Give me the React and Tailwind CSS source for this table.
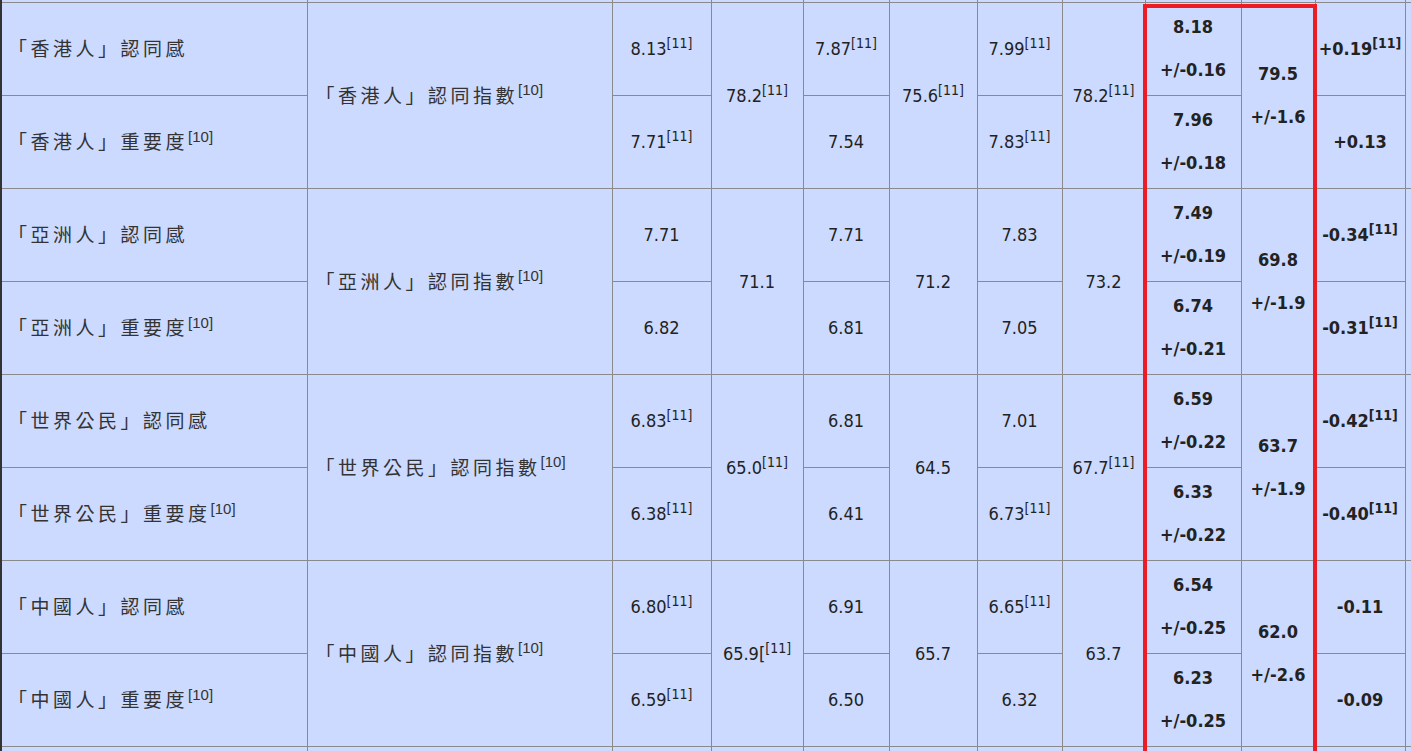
import React from 'react';

const groups = [
  {
    labels: ['「香港人」認同感', '「香港人」重要度|10'],
    index: '「香港人」認同指數|10',
    c3: ['8.13|11', '7.71|11'],
    c4: '78.2|11',
    c5: ['7.87|11', '7.54'],
    c6: '75.6|11',
    c7: ['7.99|11', '7.83|11'],
    c8: '78.2|11',
    c9: [['8.18', '+/-0.16'], ['7.96', '+/-0.18']],
    c10: ['79.5', '+/-1.6'],
    c11: ['+0.19|11', '+0.13'],
  },
  {
    labels: ['「亞洲人」認同感', '「亞洲人」重要度|10'],
    index: '「亞洲人」認同指數|10',
    c3: ['7.71', '6.82'],
    c4: '71.1',
    c5: ['7.71', '6.81'],
    c6: '71.2',
    c7: ['7.83', '7.05'],
    c8: '73.2',
    c9: [['7.49', '+/-0.19'], ['6.74', '+/-0.21']],
    c10: ['69.8', '+/-1.9'],
    c11: ['-0.34|11', '-0.31|11'],
  },
  {
    labels: ['「世界公民」認同感', '「世界公民」重要度|10'],
    index: '「世界公民」認同指數|10',
    c3: ['6.83|11', '6.38|11'],
    c4: '65.0|11',
    c5: ['6.81', '6.41'],
    c6: '64.5',
    c7: ['7.01', '6.73|11'],
    c8: '67.7|11',
    c9: [['6.59', '+/-0.22'], ['6.33', '+/-0.22']],
    c10: ['63.7', '+/-1.9'],
    c11: ['-0.42|11', '-0.40|11'],
  },
  {
    labels: ['「中國人」認同感', '「中國人」重要度|10'],
    index: '「中國人」認同指數|10',
    c3: ['6.80|11', '6.59|11'],
    c4: '65.9[|11',
    c5: ['6.91', '6.50'],
    c6: '65.7',
    c7: ['6.65|11', '6.32'],
    c8: '63.7',
    c9: [['6.54', '+/-0.25'], ['6.23', '+/-0.25']],
    c10: ['62.0', '+/-2.6'],
    c11: ['-0.11', '-0.09'],
  },
];

const widths = [306, 305, 99, 92, 86, 88, 85, 83, 96, 74, 90, 30];

const cell = 'border border-[#8a8a8a] p-0 align-middle bg-[#ccdaff]';
const numCell = `${cell} text-center text-[18px] text-[#222] font-['DejaVu_Sans_Condensed','DejaVu_Sans',sans-serif] [font-stretch:condensed]`;
const boldCell = `${numCell} font-bold`;
const zhCell = `${cell} text-left text-[19px] tracking-[3.5px] text-[#333] font-['Noto_Sans_CJK_TC',sans-serif]`;

function Val({ v, zh }) {
  const [t, s] = v.split('|');
  return (
    <>
      {t}
      {s &&
        (zh ? (
          <sup className="relative top-0 align-super text-[15px] tracking-normal font-['Liberation_Sans',sans-serif]">
            [{s}]
          </sup>
        ) : (
          <sup className="relative top-0 align-super text-[14px] tracking-normal">[{s}]</sup>
        ))}
    </>
  );
}

function Pair({ lines }) {
  return (
    <div className="flex flex-col items-center gap-[21px] leading-[22px]">
      <span>{lines[0]}</span>
      <span>{lines[1]}</span>
    </div>
  );
}

function Group({ g }) {
  return (
    <>
      <tr className="h-[93px]">
        <td className={`${zhCell} border-l-2 border-l-[#333] pl-[6px]`}>
          <Val v={g.labels[0]} zh />
        </td>
        <td rowSpan={2} className={`${zhCell} pl-[8px]`}>
          <Val v={g.index} zh />
        </td>
        <td className={numCell}><Val v={g.c3[0]} /></td>
        <td rowSpan={2} className={numCell}><Val v={g.c4} /></td>
        <td className={numCell}><Val v={g.c5[0]} /></td>
        <td rowSpan={2} className={numCell}><Val v={g.c6} /></td>
        <td className={numCell}><Val v={g.c7[0]} /></td>
        <td rowSpan={2} className={numCell}><Val v={g.c8} /></td>
        <td className={boldCell}><Pair lines={g.c9[0]} /></td>
        <td rowSpan={2} className={boldCell}><Pair lines={g.c10} /></td>
        <td className={boldCell}><Val v={g.c11[0]} /></td>
        <td rowSpan={2} className={cell}></td>
      </tr>
      <tr className="h-[93px]">
        <td className={`${zhCell} border-l-2 border-l-[#333] pl-[6px]`}>
          <Val v={g.labels[1]} zh />
        </td>
        <td className={numCell}><Val v={g.c3[1]} /></td>
        <td className={numCell}><Val v={g.c5[1]} /></td>
        <td className={numCell}><Val v={g.c7[1]} /></td>
        <td className={boldCell}><Pair lines={g.c9[1]} /></td>
        <td className={boldCell}><Val v={g.c11[1]} /></td>
      </tr>
    </>
  );
}

export default function App() {
  return (
    <div className="relative h-[751px] w-[1411px] overflow-hidden bg-[#ccdaff]">
      <table className="table-fixed border-collapse" style={{ width: widths.reduce((a, b) => a + b, 0) }}>
        <colgroup>
          {widths.map((w, i) => (
            <col key={i} style={{ width: w }} />
          ))}
        </colgroup>
        <tbody>
          <tr className="h-[2px]">
            {widths.map((w, i) => (
              <td key={i} className={`${cell} border-t-0 ${i === 0 ? 'border-l-2 border-l-[#333]' : ''}`}></td>
            ))}
          </tr>
          {groups.map((g, i) => (
            <Group key={i} g={g} />
          ))}
          <tr className="h-[20px]">
            {widths.map((w, i) => (
              <td key={i} className={`${cell} ${i === 0 ? 'border-l-2 border-l-[#333]' : ''}`}></td>
            ))}
          </tr>
        </tbody>
      </table>
      <div className="pointer-events-none absolute left-[1143px] top-[4px] h-[770px] w-[174px] border-4 border-[#ec1c24]" />
    </div>
  );
}
